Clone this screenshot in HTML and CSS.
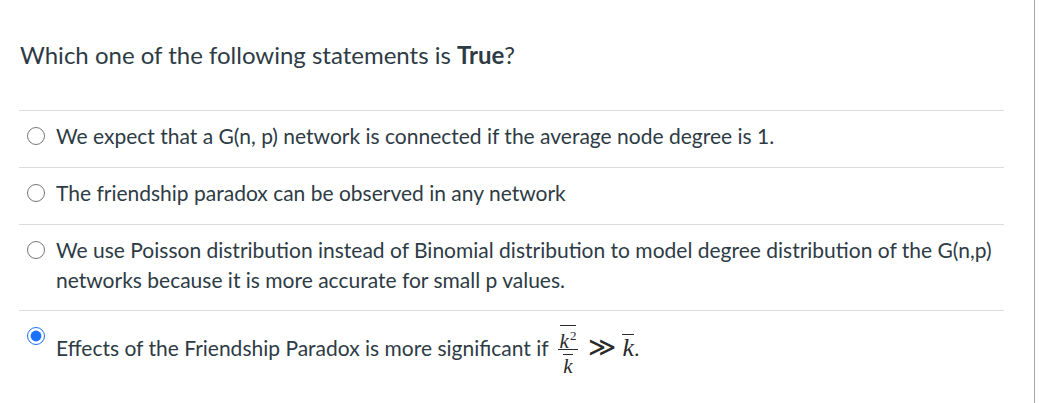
FILE: index.html
```html
<!DOCTYPE html>
<html lang="en">
<head>
<meta charset="utf-8">
<title>Quiz question</title>
<link rel="stylesheet" href="styles.css">
</head>
<body>
<div class="page">
  <div class="question">
    <p class="question-text">Which one of the following statements is <strong>True</strong>?</p>
    <div class="answers">
      <label class="answer">
        <input type="radio" name="q1" class="radio">
        <span class="answer-text">We expect that a G(n, p) network is connected if the average node degree is 1.</span>
      </label>
      <label class="answer">
        <input type="radio" name="q1" class="radio">
        <span class="answer-text">The friendship paradox can be observed in any network</span>
      </label>
      <label class="answer answer-tall">
        <input type="radio" name="q1" class="radio">
        <span class="answer-text">We use Poisson distribution instead of Binomial distribution to model degree distribution of the G(n,p) networks because it is more accurate for small p values.</span>
      </label>
      <label class="answer answer-last">
        <input type="radio" name="q1" class="radio" checked>
        <span class="answer-text">Effects of the Friendship Paradox is more significant if <span class="math"><span class="frac"><span class="num"><span class="bar num-bar">k<span class="sup">2</span></span></span><span class="den"><span class="bar den-bar">k</span></span></span><span class="gg">≫</span><span class="bar big">k</span><span class="dot">.</span></span></span>
      </label>
    </div>
  </div>
</div>
</body>
</html>
```

FILE: styles.css
```css
html, body {
  margin: 0;
  padding: 0;
  background: #ffffff;
}

body {
  font-family: Lato, "Open Sans", sans-serif;
  color: #2d3b45;
}

.page {
  width: 1034px;
  height: 403px;
  border-right: 1px solid #a8a8a8;
  box-sizing: content-box;
}

.question {
  padding: 0 30px 0 19px;
}

.question-text {
  margin: 0;
  padding: 40px 0 0 1px;
  font-size: 24px;
  line-height: 30px;
  height: 70px;
}

.question-text strong {
  font-weight: 700;
}

.answers {
  display: flex;
  flex-direction: column;
}

.answer {
  display: flex;
  align-items: flex-start;
  gap: 11px;
  border-top: 1px solid #dcdcdc;
  padding: 10px 0 16px 8px;
  font-size: 21px;
  line-height: 30px;
}

.answer-tall {
  padding-bottom: 15px;
}

.radio {
  flex: none;
  width: 18px;
  height: 18px;
  margin: 6px 0 0 0;
  accent-color: #1a73ff;
}

.answer-text {
  flex: 1;
}

.math {
  font-family: "Liberation Serif", "DejaVu Serif", serif;
  font-style: italic;
  color: #2a2a2a;
  white-space: nowrap;
  margin-left: 4px;
}

.frac {
  display: inline-flex;
  flex-direction: column;
  align-items: center;
  vertical-align: 8px;
  font-size: 21px;
  margin-right: 10px;
  padding-top: 4px;
}

.num {
  border-bottom: 1px solid #2a2a2a;
  padding: 0 2px;
  line-height: 16px;
}

.den {
  padding: 4px 2px 0;
  line-height: 16px;
}

.bar {
  display: inline-block;
  border-top: 1px solid #2a2a2a;
}

.num-bar {
  padding-top: 7px;
}

.den-bar {
  padding-top: 3px;
}

.sup {
  font-style: normal;
  font-size: 13px;
  vertical-align: 8px;
  line-height: 0;
  margin-left: 1px;
}

.gg {
  font-family: "DejaVu Sans", sans-serif;
  font-style: normal;
  font-weight: 200;
  font-size: 27px;
  line-height: 20px;
  margin-right: 6px;
}

.big {
  font-size: 26px;
  line-height: 18px;
  padding-top: 4px;
}

.dot {
  font-style: normal;
  font-size: 22px;
}
```
